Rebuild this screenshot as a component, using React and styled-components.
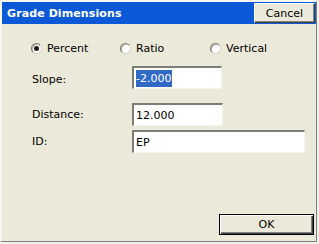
import React from 'react';
import styled, { createGlobalStyle } from 'styled-components';

const GlobalStyle = createGlobalStyle`
  html, body {
    margin: 0;
    padding: 0;
    background: #f3f2ea;
  }
  body {
    font-family: "DejaVu Sans", Verdana, sans-serif;
    font-size: 11px;
    color: #000;
  }
`;

const Window = styled.div`
  width: 317px;
  height: 242px;
  box-sizing: border-box;
  display: flex;
  flex-direction: column;
  background: #ebe9d9;
  border-style: solid;
  border-width: 2px 1px 1px 2px;
  border-color: #f8f7f1 #7f7f7f #7f7f7f #f8f7f1;
`;

const TitleBar = styled.div`
  height: 22px;
  display: flex;
  align-items: center;
  justify-content: space-between;
  padding: 0 1px 0 5px;
  background: #0b59d6;
`;

const Title = styled.div`
  color: #fff;
  font-weight: bold;
  font-size: 11px;
  letter-spacing: 0.1px;
`;

const Button = styled.button`
  box-sizing: border-box;
  width: ${(p) => p.$width}px;
  height: ${(p) => p.$height}px;
  padding: 0;
  font-family: "DejaVu Sans", Verdana, sans-serif;
  font-size: 11px;
  color: #000;
  background: #ebe9d9;
  border-style: solid;
  border-width: 1px;
  border-color: ${(p) => (p.$default ? '#000' : '#fff #404040 #404040 #fff')};
  box-shadow: ${(p) =>
    p.$default
      ? 'inset 1px 1px 0 #fff, inset -1px -1px 0 #404040, inset -2px -2px 0 #808080'
      : 'inset -1px -1px 0 #808080'};
`;

const Body = styled.div`
  flex: 1;
  display: flex;
  flex-direction: column;
  padding: 18px 2px 6px 27px;
`;

const RadioRow = styled.div`
  display: grid;
  grid-template-columns: 89px 90px 90px;
  height: 13px;
`;

const RadioOption = styled.label`
  display: flex;
  align-items: center;
  gap: 5px;
`;

const RadioCircle = styled.span`
  box-sizing: border-box;
  width: 11px;
  height: 11px;
  margin-left: 2px;
  border-radius: 50%;
  background: #fff;
  border: 1px solid;
  border-color: #7a7a72 #d8d6c8 #d8d6c8 #7a7a72;
  box-shadow: inset 1px 1px 0 #b9b7a8;
  display: flex;
  align-items: center;
  justify-content: center;

  &::after {
    content: '';
    width: 5px;
    height: 5px;
    border-radius: 50%;
    background: ${(p) => (p.$checked ? '#1e1e1e' : 'transparent')};
  }
`;

const Form = styled.div`
  display: flex;
  flex-direction: column;
  margin-top: 11px;
  padding-left: 3px;
`;

const FieldRow = styled.div`
  display: grid;
  grid-template-columns: 100px auto;
  align-items: center;
  margin-top: ${(p) => p.$top || 0}px;
`;

const Label = styled.span`
  padding-top: ${(p) => p.$drop || 0}px;
`;

const Field = styled.div`
  box-sizing: border-box;
  width: ${(p) => p.$width}px;
  height: 23px;
  display: flex;
  align-items: center;
  padding-left: 2px;
  background: #fff;
  border-style: solid;
  border-width: 2px 1px 1px 2px;
  border-color: #7d7d78 #f4f3ee #f4f3ee #7d7d78;
`;

const Selected = styled.span`
  background: #316ac5;
  color: #fff;
  line-height: 17px;
  padding-right: 1px;
`;

const Footer = styled.div`
  margin-top: auto;
  display: flex;
  justify-content: flex-end;
`;

export default function App() {
  return (
    <>
      <GlobalStyle />
      <Window>
        <TitleBar>
          <Title>Grade Dimensions</Title>
          <Button $width={61} $height={20}>Cancel</Button>
        </TitleBar>
        <Body>
          <RadioRow>
            <RadioOption><RadioCircle $checked />Percent</RadioOption>
            <RadioOption><RadioCircle />Ratio</RadioOption>
            <RadioOption><RadioCircle />Vertical</RadioOption>
          </RadioRow>
          <Form>
            <FieldRow>
              <Label $drop={4}>Slope:</Label>
              <Field $width={90}><Selected>-2.000</Selected></Field>
            </FieldRow>
            <FieldRow $top={14}>
              <Label>Distance:</Label>
              <Field $width={91}>12.000</Field>
            </FieldRow>
            <FieldRow $top={4}>
              <Label>ID:</Label>
              <Field $width={173}>EP</Field>
            </FieldRow>
          </Form>
          <Footer>
            <Button $default $width={95} $height={21}>OK</Button>
          </Footer>
        </Body>
      </Window>
    </>
  );
}
